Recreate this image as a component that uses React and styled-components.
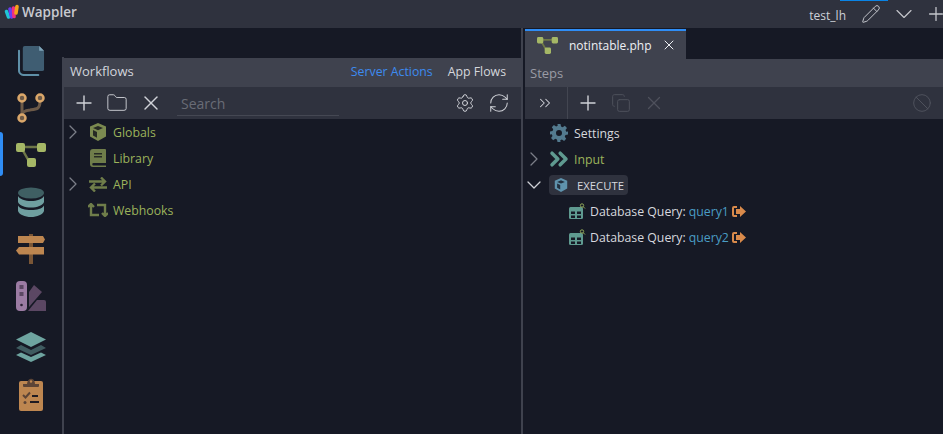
import React from 'react';
import styled, { createGlobalStyle } from 'styled-components';
import {
  Ban, ChevronDown, ChevronRight, ChevronsRight, Copy, Folder, Pencil, Plus, RefreshCw, Settings, X
} from 'lucide-react';

const GlobalStyle = createGlobalStyle`
  html, body {
    margin: 0;
    height: 100%;
    overflow: hidden;
    background: #161925;
  }
  #root { height: 100%; }
  * { box-sizing: border-box; }
  svg { flex-shrink: 0; }
`;

const Page = styled.div`
  display: flex;
  flex-direction: column;
  width: 943px;
  height: 434px;
  font-family: "Open Sans", "Noto Sans", sans-serif;
  font-size: 13px;
  color: #d6d8de;
  overflow: hidden;
`;

const TopBar = styled.header`
  position: relative;
  display: flex;
  align-items: center;
  flex: 0 0 28px;
  padding-left: 4px;
  background: #2f323e;
  &::after {
    content: '';
    position: absolute;
    top: 0;
    left: 840px;
    width: 48px;
    height: 1px;
    background: #0a84e6;
  }
`;

const LogoMark = styled.svg`
  margin-bottom: 4px;
`;

const Brand = styled.span`
  margin: 0 0 4px 2px;
  font-size: 13.5px;
  font-weight: 600;
  color: #c9cad0;
`;

const TopActions = styled.div`
  display: flex;
  align-items: center;
  margin-left: auto;
  color: #c4c6cc;
`;

const ProjectName = styled.span`
  margin: 2px 17px 0 0;
  color: #ced1d8;
  font-size: 12px;
`;

const TopButton = styled.span`
  display: flex;
  justify-content: center;
  flex: 0 0 ${p => p.$width}px;
  min-width: 0;
`;

const Main = styled.div`
  display: flex;
  flex: 1;
  min-height: 0;
`;

const Rail = styled.nav`
  flex: 0 0 62px;
  padding-top: 9px;
`;

const RailItem = styled.div`
  position: relative;
  display: flex;
  align-items: center;
  justify-content: center;
  height: 47px;
  margin-top: ${p => p.$gap || 0}px;
  ${p => p.$active && `
    &::before {
      content: '';
      position: absolute;
      left: 0;
      top: 1px;
      width: 3px;
      height: 44px;
      border-radius: 0 3px 3px 0;
      background: #2f8df5;
    }
  `}
`;

const LeftColumn = styled.section`
  display: flex;
  flex-direction: column;
  flex: 0 0 459px;
  min-width: 0;
  padding-top: 30px;
  border-left: 2px solid #3f424e;
  border-image: linear-gradient(to bottom, transparent 30px, #3f424e 30px) 1;
`;

const RightColumn = styled.section`
  display: flex;
  flex-direction: column;
  flex: 1;
  min-width: 0;
  margin-left: 2px;
  padding-top: 1px;
`;

const Divider = styled.div`
  flex: 0 0 2px;
  background: #3f424e;
`;

const PanelHead = styled.div`
  display: flex;
  align-items: center;
  flex: 0 0 ${p => p.$height}px;
  padding: 0 ${p => p.$right || 15}px ${p => p.$bottom || 0}px ${p => p.$left}px;
  background: #3f424e;
  color: ${p => p.$muted ? '#9a9ca5' : '#d2d5dc'};
  font-size: 13px;
`;

const HeadLinks = styled.div`
  display: flex;
  gap: 15px;
  margin-left: auto;
`;

const HeadLink = styled.span`
  color: ${p => p.$active ? '#3d8bf0' : '#d5d7dc'};
  font-size: 12.3px;
`;

const Toolbar = styled.div`
  display: flex;
  align-items: center;
  flex: 0 0 32px;
  background: #2f323e;
  color: #d0d2d8;
`;

const ToolSlot = styled.span`
  display: flex;
  align-items: center;
  justify-content: center;
  flex: 0 0 ${p => p.$width}px;
  min-width: 0;
  height: 100%;
  margin-left: ${p => p.$left || 0}px;
  padding-right: ${p => p.$inset || 0}px;
  color: ${p => p.$dim ? '#4e515c' : 'inherit'};
  ${p => p.$split && 'border-right: 1px solid #434651;'}
`;

const SearchBox = styled.div`
  display: flex;
  align-items: center;
  width: 162px;
  height: 24px;
  margin-left: 18px;
  margin-top: 2px;
  padding-left: 4px;
  border-bottom: 1px solid #454853;
  color: #696c76;
  font-size: 14px;
`;

const TabBar = styled.div`
  display: flex;
  flex: 0 0 30px;
`;

const Tab = styled.div`
  display: flex;
  align-items: center;
  width: 161px;
  padding-left: 12px;
  border-top: 2px solid #2f8df5;
  background: #3f424e;
  color: #eef0f4;
  font-size: 12px;
`;

const TabLabel = styled.span`
  margin: 0 9px 0 11px;
`;

const Tree = styled.div`
  display: flex;
  flex-direction: column;
  padding-top: ${p => p.$top || 0}px;
`;

const Row = styled.div`
  display: flex;
  align-items: center;
  height: 26px;
  padding-left: ${p => p.$indent || 0}px;
`;

const Caret = styled.span`
  display: flex;
  justify-content: center;
  flex: 0 0 ${p => p.$width}px;
  min-width: 0;
  color: ${p => p.$open ? '#cfd1d6' : '#7b7e88'};
`;

const TreeIcon = styled.span`
  display: flex;
  justify-content: center;
  flex: 0 0 ${p => p.$width}px;
  min-width: 0;
  margin-left: ${p => p.$left || 0}px;
`;

const Label = styled.span`
  margin-left: ${p => p.$left || 0}px;
  color: ${p => p.$color || '#d6d8de'};
  font-size: ${p => p.$size || 12.3}px;
`;

const ExecutePill = styled.div`
  display: flex;
  align-items: center;
  width: 79px;
  height: 20px;
  margin-left: 6px;
  padding-left: 5px;
  border-radius: 4px;
  background: #2f323e;
`;

const QueryName = styled.span`
  margin-left: 3px;
  color: #4a9cc4;
`;

const Logo = () => (
  <LogoMark width="16" height="16" viewBox="0 0 16 16" fill="none" strokeLinecap="round" strokeWidth="3.6">
    <path d="M2.500 7.500L4.500 13" stroke="#1fc4d6" />
    <path d="M6 5L7.500 13" stroke="#6a3df0" />
    <path d="M9.500 4L10 12.500" stroke="#f0307f" />
    <path d="M13 2.500L12 9" stroke="#f7a21b" />
  </LogoMark>
);

const FilesIcon = () => (
  <svg width="27" height="31" viewBox="0 0 28 32">
    <path d="M7 1h15l5 5v19a2 2 0 0 1-2 2H7a2 2 0 0 1-2-2V3a2 2 0 0 1 2-2z" fill="#3f5d72" />
    <path d="M22 1l5 5h-5z" fill="#7fa4b8" />
    <path d="M1 6v20a5 5 0 0 0 5 5h15" fill="none" stroke="#5f90a8" strokeWidth="2.2" strokeLinecap="round" />
  </svg>
);

const BranchIcon = () => (
  <svg width="28" height="30" viewBox="0 0 28 30">
    <path d="M5 8v14M23 8c0 8-3 8-10 9-5 .6-8 1.500-8 5" fill="none" stroke="#6d5a48" strokeWidth="3" />
    <circle cx="5" cy="5" r="3.500" fill="#6d5a48" stroke="#dba76a" strokeWidth="2.500" />
    <circle cx="23" cy="5" r="3.500" fill="#6d5a48" stroke="#dba76a" strokeWidth="2.500" />
    <circle cx="5" cy="25" r="3.500" fill="#6d5a48" stroke="#dba76a" strokeWidth="2.500" />
  </svg>
);

const FlowIcon = ({ size = 30, height = 24 }) => (
  <svg width={size} height={height} viewBox="0 0 30 24">
    <path d="M5 4h20M6 6l8 14" fill="none" stroke="#6e7748" strokeWidth="2.500" />
    <rect x="0" y="0" width="9" height="9" rx="2" fill="#a5b766" />
    <rect x="21" y="0" width="9" height="9" rx="2" fill="#a5b766" />
    <rect x="11" y="15" width="9" height="9" rx="2" fill="#a5b766" />
  </svg>
);

const DatabaseIcon = () => (
  <svg width="28" height="30" viewBox="0 0 28 30">
    <ellipse cx="14" cy="6" rx="13" ry="5.500" fill="#3f5f63" />
    <path d="M1 9c2 3.500 7 5 13 5s11-1.500 13-5v6c-1 3.500-7 5.500-13 5.500S2 18.500 1 15z" fill="#6f9fa0" />
    <path d="M1 18.500c2 3.500 7 4.500 13 4.500s11-1 13-4.500V24c-1 3.500-7 6-13 6S2 27.500 1 24z" fill="#6f9fa0" />
  </svg>
);

const SignIcon = () => (
  <svg width="30" height="30" viewBox="0 0 30 30">
    <rect x="13" y="0" width="4" height="30" fill="#7a5636" />
    <path d="M2 2h25l2 3.500-2 3.500H2z" fill="#bd8650" />
    <path d="M28 13H3l-3 3.500 3 4h25z" fill="#bd8650" />
  </svg>
);

const SwatchIcon = () => (
  <svg width="30" height="30" viewBox="0 0 30 30">
    <path d="M13 11l5-7 8 7-13 15z" fill="#5b4763" />
    <path d="M21 19h7a2 2 0 0 1 2 2v9H12z" fill="#5b4763" />
    <rect x="0" y="0" width="11" height="30" rx="4" fill="#9b7ba3" />
    <rect x="3.500" y="4" width="4" height="4" fill="#5b4763" />
    <rect x="3.500" y="11" width="4" height="4" fill="#5b4763" />
    <circle cx="5.500" cy="24" r="1.300" fill="#2c2236" />
  </svg>
);

const LayersIcon = () => (
  <svg width="30" height="30" viewBox="0 0 30 30">
    <path d="M15 0l15 7.500L15 15 0 7.500z" fill="#6ea4a0" />
    <path d="M5 13l10 5 10-5 5 3-15 7-15-7z" fill="#3f5b60" />
    <path d="M5 20.500l10 4.500 10-4.500 5 2.500-15 7-15-7z" fill="#6ea4a0" />
  </svg>
);

const ClipboardIcon = () => (
  <svg width="26" height="34" viewBox="0 0 26 34">
    <rect x="1" y="4" width="24" height="30" rx="2" fill="#bd8650" />
    <path d="M5 9V7h4c.5-7 8-7 8 0h4v2a1 1 0 0 1-1 1H6a1 1 0 0 1-1-1z" fill="#5c4436" />
    <circle cx="13" cy="4.500" r="1.200" fill="#bd8650" />
    <path d="M5 18l2.500 2.500L12 15.500" fill="none" stroke="#5c4436" strokeWidth="2" />
    <path d="M14 19h6M12 25h9" stroke="#1f1b22" strokeWidth="1.800" />
    <circle cx="7" cy="25.500" r="1.500" fill="#5c4436" />
  </svg>
);

const CubeIcon = ({ fill, shade, size = 18 }) => (
  <svg width={size} height={size} viewBox="0 0 18 18">
    <path d="M9 0l8 3.500v10L9 18l-8-4.500v-10z" fill={fill} />
    <path d="M9 3L4 5l5 2.200L14 5zM4 7v5.500l4 2.200V9z" fill={shade} />
  </svg>
);

const BookIcon = () => (
  <svg width="16" height="18" viewBox="0 0 16 18">
    <path d="M3 0h12a1 1 0 0 1 1 1v13H3.500a1.200 1.200 0 0 0 0 2.500H16V18H3a3 3 0 0 1-3-3V3a3 3 0 0 1 3-3z" fill="#6f7d4a" />
    <rect x="4" y="4" width="8" height="1.500" fill="#262a24" />
    <rect x="4" y="7" width="8" height="1.500" fill="#262a24" />
  </svg>
);

const ArrowsIcon = () => (
  <svg width="18" height="15" viewBox="0 0 18 14" fill="none" stroke="#6f7d4a" strokeWidth="2.400">
    <path d="M0 4h16M12 0l4 4-4 4" />
    <path d="M18 10H2M6 6l-4 4 4 4" />
  </svg>
);

const RetweetIcon = () => (
  <svg width="20" height="14" viewBox="0 0 20 14" fill="none" stroke="#6f7d4a" strokeWidth="2.400">
    <path d="M0 4l3-3 3 3M3 1v11h8" />
    <path d="M14 10l3 3 3-3M17 13V2H9" />
  </svg>
);

const GearIcon = () => (
  <svg width="18" height="18" viewBox="0 0 24 24">
    <path
      fill="#537a8f"
      fillRule="evenodd"
      d="M10 0h4l.7 3.400 2.200.9 2.900-1.900 2.800 2.800-1.900 2.900.9 2.200L24 10v4l-3.400.7-.9 2.200 1.900 2.900-2.800 2.800-2.900-1.900-2.200.9L14 24h-4l-.7-3.400-2.200-.9-2.900 1.900-2.800-2.800 1.900-2.900-.9-2.200L0 14v-4l3.400-.7.900-2.200-1.900-2.900 2.800-2.800 2.900 1.900 2.200-.9zM12 8a4 4 0 1 0 0 8 4 4 0 0 0 0-8z"
    />
  </svg>
);

const TableIcon = () => (
  <svg width="17" height="17" viewBox="0 0 17 17">
    <rect x="0" y="4" width="14" height="12" rx="1.500" fill="#5f9a90" />
    <path d="M2 8.500h4V11H2zM8 8.500h4V11H8zM2 12.500h4V15H2zM8 12.500h4V15H8z" fill="#161925" />
    <circle cx="13" cy="2.500" r="1.700" fill="none" stroke="#8fa65a" strokeWidth="1" />
    <path d="M14.200 3.700L16 5.500" stroke="#8fa65a" strokeWidth="1" />
  </svg>
);

const OutputIcon = () => (
  <svg width="14" height="11" viewBox="0 0 14 11">
    <path d="M5 0H2a2 2 0 0 0-2 2v7a2 2 0 0 0 2 2h3V9H2V2h3z" fill="#d98a4b" />
    <path d="M8 0l6 5.500L8 11V8H4V3h4z" fill="#d98a4b" />
  </svg>
);

const railIcons = [
  { id: 'files', icon: <FilesIcon /> },
  { id: 'git', icon: <BranchIcon /> },
  { id: 'flows', icon: <FlowIcon />, active: true },
  { id: 'database', icon: <DatabaseIcon /> },
  { id: 'routes', icon: <SignIcon /> },
  { id: 'design', icon: <SwatchIcon /> },
  { id: 'layers', icon: <LayersIcon />, gap: 4 },
  { id: 'tasks', icon: <ClipboardIcon /> }
];

const workflows = [
  { name: 'Globals', icon: <CubeIcon fill="#7b8a50" shade="#262a24" />, caret: true },
  { name: 'Library', icon: <BookIcon /> },
  { name: 'API', icon: <ArrowsIcon />, caret: true },
  { name: 'Webhooks', icon: <RetweetIcon /> }
];

const queries = ['query1', 'query2'];

function App() {
  return (
    <Page>
      <GlobalStyle />
      <TopBar>
        <Logo />
        <Brand>Wappler</Brand>
        <TopActions>
          <ProjectName>test_lh</ProjectName>
          <TopButton $width="16"><Pencil size={20} strokeWidth={1.2} /></TopButton>
          <TopButton $width="49"><ChevronDown size={28} strokeWidth={1} /></TopButton>
          <TopButton $width="15"><Plus size={22} strokeWidth={1.4} /></TopButton>
        </TopActions>
      </TopBar>
      <Main>
        <Rail>
          {railIcons.map(item => (
            <RailItem key={item.id} $active={item.active} $gap={item.gap}>{item.icon}</RailItem>
          ))}
        </Rail>
        <LeftColumn>
          <PanelHead $height={29} $left={6} $right={15} $bottom={3}>
            Workflows
            <HeadLinks>
              <HeadLink $active>Server Actions</HeadLink>
              <HeadLink>App Flows</HeadLink>
            </HeadLinks>
          </PanelHead>
          <Toolbar>
            <ToolSlot $width={18} $left={11}><Plus size={24} strokeWidth={1.4} /></ToolSlot>
            <ToolSlot $width={20} $left={14}><Folder size={22} strokeWidth={1} /></ToolSlot>
            <ToolSlot $width={16} $left={16}><X size={24} strokeWidth={1.4} /></ToolSlot>
            <SearchBox>Search</SearchBox>
            <ToolSlot $width={18} $left={117}><Settings size={20} strokeWidth={1.2} /></ToolSlot>
            <ToolSlot $width={20} $left={15}><RefreshCw size={22} strokeWidth={1.1} /></ToolSlot>
          </Toolbar>
          <Tree>
            {workflows.map(item => (
              <Row key={item.name}>
                <Caret $width={18}>{item.caret && <ChevronRight size={24} strokeWidth={1.3} />}</Caret>
                <TreeIcon $width={20} $left={6}>{item.icon}</TreeIcon>
                <Label $left={5} $color="#9cb35b">{item.name}</Label>
              </Row>
            ))}
          </Tree>
        </LeftColumn>
        <Divider />
        <RightColumn>
          <TabBar>
            <Tab>
              <FlowIcon size={21} height={17} />
              <TabLabel>notintable.php</TabLabel>
              <X size={16} strokeWidth={1.5} />
            </Tab>
          </TabBar>
          <PanelHead $height={28} $left={5} $muted>Steps</PanelHead>
          <Toolbar>
            <ToolSlot $width={43} $inset={3} $split><ChevronsRight size={18} strokeWidth={1.4} /></ToolSlot>
            <ToolSlot $width={18} $left={11}><Plus size={24} strokeWidth={1.4} /></ToolSlot>
            <ToolSlot $width={18} $left={15} $dim><Copy size={20} strokeWidth={1.2} /></ToolSlot>
            <ToolSlot $width={18} $left={15} $dim><X size={22} strokeWidth={1.4} /></ToolSlot>
            <ToolSlot $width={18} $left={250} $dim><Ban size={20} strokeWidth={1.2} /></ToolSlot>
          </Toolbar>
          <Tree $top={1}>
            <Row>
              <Caret $width={18} />
              <TreeIcon $width={18} $left={7}><GearIcon /></TreeIcon>
              <Label $left={6}>Settings</Label>
            </Row>
            <Row>
              <Caret $width={18}><ChevronRight size={24} strokeWidth={1.3} /></Caret>
              <TreeIcon $width={18} $left={7}><ChevronsRight size={28} strokeWidth={3} color="#5f9a90" /></TreeIcon>
              <Label $left={6} $color="#9cb35b">Input</Label>
            </Row>
            <Row>
              <Caret $width={18} $open><ChevronDown size={24} strokeWidth={1.3} /></Caret>
              <ExecutePill>
                <CubeIcon fill="#5f93ad" shade="#22303f" size={14} />
                <Label $left={9} $size={11.3}>EXECUTE</Label>
              </ExecutePill>
            </Row>
            {queries.map(query => (
              <Row key={query} $indent={44}>
                <TableIcon />
                <Label $left={4}>Database Query:<QueryName>{query}</QueryName></Label>
                <TreeIcon $width={20}><OutputIcon /></TreeIcon>
              </Row>
            ))}
          </Tree>
        </RightColumn>
      </Main>
    </Page>
  );
}

export default App;
